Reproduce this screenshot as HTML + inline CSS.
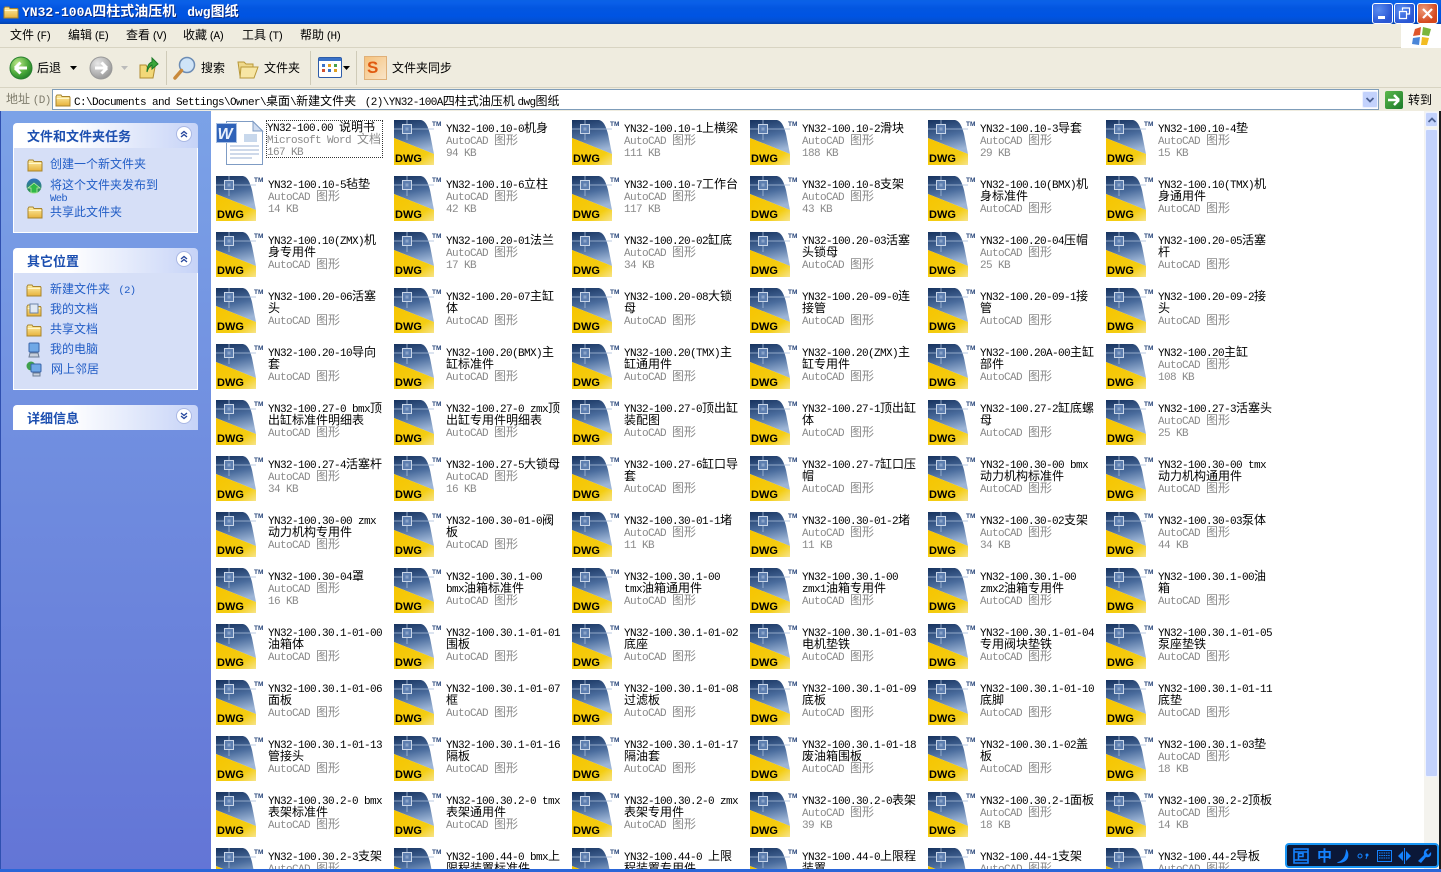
<!DOCTYPE html>
<html lang="zh"><head><meta charset="utf-8"><title>YN32-100A</title>
<style>
html,body{margin:0;padding:0;width:1441px;height:872px;overflow:hidden;background:#fff}
body{position:relative;font:12px/12px "WenQuanYi Zen Hei","Noto Sans CJK SC",sans-serif;color:#000}
.a{position:absolute;white-space:nowrap}
i{font:normal 11px/0 "Liberation Mono",monospace;letter-spacing:-.6px}
#title{left:0;top:0;width:1441px;height:24px;background:linear-gradient(#0a62e6 0,#0a5fe8 3px,#0356e0 8px,#0054e3 16px,#0350d2 21px,#0342ac 24px)}
#title .t{left:22px;top:4px;color:#fff;font-weight:bold;font-size:14px;line-height:15px;text-shadow:1px 1px 0 #0a2a80}
#title .t i{font-weight:bold;font-size:13px;letter-spacing:0}
.wb{top:3px;width:19px;height:19px;border:1px solid #fff;border-radius:3px;box-sizing:content-box;background:radial-gradient(circle at 30% 30%,#5a8cf0,#2a57d4 70%)}
#menu{left:0;top:24px;width:1441px;height:24px;background:#efecdf;border-bottom:1px solid #d8d4c2;box-sizing:border-box}
#menu span{position:absolute;top:5px}
#menu i{letter-spacing:-1.8px;margin-left:-1px}
#tool{left:0;top:48px;width:1441px;height:40px;background:#efecdf;border-bottom:1px solid #d8d4c2;box-sizing:border-box}
.sep{position:absolute;top:3px;width:1px;height:34px;background:#cfcbb8}
#addr{left:0;top:88px;width:1441px;height:23px;background:#efecdf}
#box{position:absolute;left:52px;top:1px;width:1327px;height:21px;border:1px solid #7f9db9;box-sizing:border-box;background:#fff}
#side{left:0;top:111px;width:211px;height:758px;background:linear-gradient(#7ba2e7,#6375d6);border-left:1px solid #2f50b0;box-sizing:border-box}
.ph{position:absolute;left:12px;width:185px;height:25px;border-radius:4px 4px 0 0;background:linear-gradient(90deg,#fff 30%,#c6d3f7);color:#1c4fb0;font-weight:bold;font-size:13px}
.ph span{position:absolute;left:14px;top:6px;line-height:13px}
.ph svg{position:absolute;right:6px;top:3px}
.pb{position:absolute;left:12px;width:185px;background:#d6dff7;border:1px solid #fff;border-top:0;box-sizing:border-box}
.l{color:#215dc6;left:50px}
.l i{font-size:10.5px}
#main{left:211px;top:111px;width:1213px;height:758px;background:#fff;overflow:hidden}
#grid{position:absolute;left:5px;top:9px;display:grid;grid-template-columns:repeat(6,178px);grid-auto-rows:56px}
.c{position:relative;height:56px}
.c svg{position:absolute;left:0;top:0;width:48px;height:46px}
.c u{position:absolute;left:1px;top:33px;text-decoration:none;font:bold 11px/12px "Liberation Sans",sans-serif;color:#000}
.c p{position:absolute;left:52px;top:2px;margin:0;white-space:nowrap}
.c b{font-weight:normal;color:#8a8a8a}
#sb{left:1424px;top:111px;width:15px;height:758px;background:#f4f3ee}
#thumb{position:absolute;left:1px;top:18px;width:13px;height:648px;background:#c3d2fc;border:1px solid #eef2fe;box-sizing:border-box;border-radius:2px}
#up{position:absolute;left:1px;top:1px;width:13px;height:15px;background:#c3d2fc;border:1px solid #eef2fe;box-sizing:border-box;border-radius:2px}
#task{left:0;top:869px;width:1441px;height:3px;background:#2a66d8}
#lang{left:1285px;top:843px;width:154px;height:25px;background:#0b1838;border:2px solid #1a96f5;border-radius:4px;box-sizing:border-box;color:#1583ff}
</style></head><body>
<svg width="0" height="0" style="position:absolute">
<defs>
<linearGradient id="bg" x1="0" y1="0" x2="0.25" y2="1"><stop offset="0" stop-color="#16325e"/><stop offset=".55" stop-color="#4b6d9e"/><stop offset="1" stop-color="#9db5d6"/></linearGradient>
<linearGradient id="yg" x1="0" y1="0" x2="1" y2="1"><stop offset="0" stop-color="#f6c400"/><stop offset=".7" stop-color="#f4cd12"/><stop offset="1" stop-color="#f7e48a"/></linearGradient>
<linearGradient id="fg" x1="0" y1="0" x2="0" y2="1"><stop offset="0" stop-color="#fff0a8"/><stop offset="1" stop-color="#e6b23c"/></linearGradient>
<symbol id="d" viewBox="0 0 48 46">
<path d="M1 0H27C32 1 34 7 36 14L40 34 0 18V0Z" fill="url(#bg)"/>
<path d="M0 18 40 34V45H0Z" fill="url(#yg)"/>
<path d="M13 0V20M0 9H40" stroke="#a9bdd8" stroke-width="1" opacity=".8" fill="none"/>
<rect x="8.500" y="4.500" width="9" height="9" fill="#5d7eaf" stroke="#c9d6e8"/>
<rect x="11.500" y="7.500" width="3" height="3" fill="#8aa4c9"/>
<text x="38" y="6" font-family="Liberation Sans" font-weight="bold" font-size="6.500" fill="#27457a">TM</text>
</symbol>
<symbol id="f" viewBox="0 0 16 16"><path d="M1 4.500 2 3H6L7 4.500H14.500L15 5.500V14H1Z" fill="url(#fg)" stroke="#a8842c"/><path d="M1.500 6.500H14.500" stroke="#fff6c8"/></symbol>
<symbol id="c" viewBox="0 0 16 16"><circle cx="8" cy="8" r="7.500" fill="#fff" stroke="#aab8e4"/><path d="M5 8 8 5.500 11 8M5 11 8 8.500 11 11" fill="none" stroke="#24459c" stroke-width="1.300"/></symbol>
<symbol id="e" viewBox="0 0 16 16"><circle cx="8" cy="8" r="7.500" fill="#fff" stroke="#aab8e4"/><path d="M5 5 8 7.500 11 5M5 8 8 10.500 11 8" fill="none" stroke="#24459c" stroke-width="1.300"/></symbol>
</defs></svg>

<div class="a" id="title">
<svg class="a" style="left:3px;top:4px" width="16" height="16"><use href="#f"/></svg>
<div class="a t"><i>YN32-100A</i>四柱式油压机 <i>&nbsp;dwg</i>图纸</div>
<div class="a wb" style="left:1372px"><div class="a" style="left:5px;top:12px;width:7px;height:3px;background:#fff"></div></div>
<div class="a wb" style="left:1394px"><svg class="a" style="left:3px;top:3px" width="13" height="13"><path d="M4.500 3.500V1H11.500V7H9M1.500 4.500H8.500V11.500H1.500Z" fill="none" stroke="#fff" stroke-width="1.200"/></svg></div>
<div class="a wb" style="left:1417px;background:radial-gradient(circle at 30% 30%,#ee9a78,#d4481e 70%)"><svg class="a" style="left:4px;top:4px" width="11" height="11"><path d="M1 1 10 10M10 1 1 10" stroke="#fff" stroke-width="2.200"/></svg></div>
</div>

<div class="a" id="menu">
<span style="left:10px">文件 <i>(F)</i></span><span style="left:68px">编辑 <i>(E)</i></span><span style="left:126px">查看 <i>(V)</i></span><span style="left:183px">收藏 <i>(A)</i></span><span style="left:242px">工具 <i>(T)</i></span><span style="left:300px">帮助 <i>(H)</i></span>
<div class="a" style="left:1401px;top:0;width:40px;height:24px;background:#fff"></div>
<svg class="a" style="left:1411px;top:2px" width="22" height="20"><path d="M4 3 10 1 9 9 2 10Z" fill="#e0562a"/><path d="M12 1 20 3 18 10 11 9Z" fill="#7ab53c"/><path d="M2 12 9 11 8 19 1 18Z" fill="#4a86d8"/><path d="M11 11 18 12 16 19 10 19Z" fill="#f2bc22"/></svg>
</div>

<div class="a" id="tool">
<svg class="a" style="left:9px;top:8px" width="24" height="24"><defs><radialGradient id="gr" cx=".35" cy=".3" r=".8"><stop offset="0" stop-color="#bfe88a"/><stop offset=".6" stop-color="#4aa83a"/><stop offset="1" stop-color="#1c7a28"/></radialGradient><radialGradient id="gy" cx=".35" cy=".3" r=".8"><stop offset="0" stop-color="#e8e8e8"/><stop offset="1" stop-color="#8f8f8f"/></radialGradient></defs><circle cx="12" cy="12" r="11" fill="url(#gr)" stroke="#2a8030"/><path d="M6 12H18M6 12 11.500 6.500M6 12 11.500 17.500" stroke="#fff" stroke-width="3" fill="none"/></svg>
<span class="a" style="left:37px;top:14px">后退</span>
<svg class="a" style="left:70px;top:18px" width="7" height="4"><path d="M0 0H7L3.500 4Z"/></svg>
<svg class="a" style="left:89px;top:8px" width="24" height="24"><circle cx="12" cy="12" r="11" fill="url(#gy)" stroke="#999"/><path d="M6 12H18M18 12 12.500 6.500M18 12 12.500 17.500" stroke="#fff" stroke-width="3" fill="none"/></svg>
<svg class="a" style="left:121px;top:18px" width="7" height="4"><path d="M0 0H7L3.500 4Z" fill="#bbb"/></svg>
<svg class="a" style="left:138px;top:7px" width="22" height="24"><path d="M2 10H8L9 12H17L15 23H2Z" fill="#f2d878" stroke="#b08c30"/><path d="M9 17C9 11 11 8 14 7V3L20 9 14 14V10C12 11 10 13 9 17Z" fill="#3aa63a" stroke="#1c7a28"/></svg>
<div class="sep" style="left:166px"></div>
<svg class="a" style="left:172px;top:7px" width="26" height="26"><circle cx="15" cy="10" r="7.500" fill="#cfe4f7" stroke="#6c8cb4" stroke-width="1.500"/><path d="M9.500 15.500 3 23" stroke="#c98a3c" stroke-width="3.500" stroke-linecap="round"/></svg>
<span class="a" style="left:201px;top:14px">搜索</span>
<svg class="a" style="left:236px;top:9px" width="24" height="24"><path d="M2 5H8L10 7H17V19H4Z" fill="#efd98c" stroke="#b89838"/><path d="M5 10H22L18 21H4Z" fill="#f7e6a4" stroke="#b89838"/></svg>
<span class="a" style="left:264px;top:14px">文件夹</span>
<div class="sep" style="left:310px"></div>
<svg class="a" style="left:318px;top:9px" width="24" height="21"><rect x=".5" y=".5" width="23" height="20" rx="1.500" fill="#fff" stroke="#2d5ca8"/><rect x="1" y="1" width="22" height="3" fill="#3a72c8"/><path d="M4 7h3v3H4z" fill="#3a72c8"/><path d="M10 7h3v3h-3z" fill="#e0a020"/><path d="M16 7h3v3h-3z" fill="#48a048"/><path d="M4 12h3v3H4z" fill="#d05030"/><path d="M10 12h3v3h-3z" fill="#3a72c8"/><path d="M16 12h3v3h-3z" fill="#e0a020"/></svg>
<svg class="a" style="left:343px;top:18px" width="7" height="4"><path d="M0 0H7L3.500 4Z"/></svg>
<div class="sep" style="left:356px"></div>
<div class="a" style="left:364px;top:8px;width:23px;height:24px;background:linear-gradient(135deg,#f6c27c,#f8e4c8);border:1px solid #e0b078;box-sizing:border-box;color:#e05a10;font:bold 17px/22px 'Liberation Sans',sans-serif;text-indent:2px">S</div>
<span class="a" style="left:392px;top:14px">文件夹同步</span>
</div>

<div class="a" id="addr">
<span class="a" style="left:6px;top:5px;color:#7f7c6c">地址 <i>(D)</i></span>
<div id="box"></div>
<svg class="a" style="left:55px;top:4px" width="16" height="16"><use href="#f"/></svg>
<span class="a" style="left:74px;top:7px"><i>C:\Documents and Settings\Owner\</i>桌面<i>\</i>新建文件夹 <i>&nbsp;(2)\YN32-100A</i>四柱式油压机 <i>dwg</i>图纸</span>
<div class="a" style="left:1362px;top:3px;width:16px;height:17px;background:#c3d2fc;border:1px solid #eef2fe;box-sizing:border-box;border-radius:2px"><svg class="a" style="left:3px;top:5px" width="8" height="6"><path d="M.5 1 4 4.500 7.500 1" fill="none" stroke="#4a5f90" stroke-width="1.800"/></svg></div>
<div class="a" style="left:1385px;top:3px;width:18px;height:18px;border-radius:2px;background:linear-gradient(135deg,#5cb84c,#1a7a2a)"><svg class="a" style="left:2px;top:2px" width="14" height="14"><path d="M1 7H12M12 7 7 2M12 7 7 12" stroke="#fff" stroke-width="2.500" fill="none"/></svg></div>
<span class="a" style="left:1408px;top:6px">转到</span>
</div>

<div class="a" id="side">
<div class="ph" style="top:12px"><span>文件和文件夹任务</span><svg width="16" height="16"><use href="#c"/></svg></div>
<div class="pb" style="top:37px;height:85px"></div>
<svg class="a" style="left:26px;top:46px" width="16" height="16"><use href="#f"/></svg>
<svg class="a" style="left:25px;top:67px" width="16" height="16"><defs><linearGradient id="gl" x1="0" y1="0" x2="0" y2="1"><stop offset="0" stop-color="#2f6fc0"/><stop offset="1" stop-color="#2f9a3c"/></linearGradient></defs><circle cx="8" cy="8" r="7.500" fill="url(#gl)"/><path d="M8 5 14 10H11V15H5V10H2Z" fill="#2fb848" stroke="#bdf0a4" stroke-width=".8"/></svg>
<svg class="a" style="left:26px;top:93px" width="16" height="16"><use href="#f"/></svg>
<span class="a l" style="top:47px;left:49px">创建一个新文件夹</span>
<span class="a l" style="top:68px;left:49px">将这个文件夹发布到</span>
<span class="a l" style="top:80px;left:49px"><i>Web</i></span>
<span class="a l" style="top:95px;left:49px">共享此文件夹</span>

<div class="ph" style="top:137px"><span>其它位置</span><svg width="16" height="16"><use href="#c"/></svg></div>
<div class="pb" style="top:162px;height:117px"></div>
<svg class="a" style="left:25px;top:171px" width="16" height="16"><use href="#f"/></svg>
<svg class="a" style="left:25px;top:191px" width="16" height="16"><use href="#f"/><rect x="4" y="2" width="8" height="9" fill="#dfe8f4" stroke="#6c84a8"/></svg>
<svg class="a" style="left:25px;top:211px" width="16" height="16"><use href="#f"/></svg>
<svg class="a" style="left:26px;top:231px" width="14" height="16"><rect x="2" y="1" width="10" height="9" rx="1" fill="#6fa8e6" stroke="#3a64a8"/><path d="M3 11H11L12 15H2Z" fill="#c8d0dc" stroke="#6c7c94"/></svg>
<svg class="a" style="left:25px;top:250px" width="17" height="16"><circle cx="5" cy="5" r="4.500" fill="#3fa04c"/><rect x="5" y="3" width="10" height="8" rx="1" fill="#6fa8e6" stroke="#3a64a8"/><path d="M7 12H14V15H7Z" fill="#c8d0dc" stroke="#6c7c94"/></svg>
<span class="a l" style="top:172px;left:49px">新建文件夹 <i>&nbsp;(2)</i></span>
<span class="a l" style="top:192px;left:49px">我的文档</span>
<span class="a l" style="top:212px;left:49px">共享文档</span>
<span class="a l" style="top:232px;left:49px">我的电脑</span>
<span class="a l" style="top:252px;left:50px">网上邻居</span>

<div class="ph" style="top:294px"><span>详细信息</span><svg width="16" height="16"><use href="#e"/></svg></div>
</div>

<div class="a" id="main"><div id="grid">
<div class="c"><svg viewBox="0 0 48 46"><path d="M10.500 1.500H37L46.500 11V44.500H10.500Z" fill="#fff" stroke="#7f9cc4"/><path d="M37 1.500V11H46.500Z" fill="#cfdcf0" stroke="#7f9cc4"/><path d="M14 26H43M14 30H43M14 34H43M14 38H36" stroke="#9db3d4"/><rect x="28" y="14" width="13" height="8" fill="#c8d8ec"/><rect x=".5" y="3.500" width="20" height="19" fill="#2f62b8" stroke="#a8c0e4"/><text x="1.500" y="19" font-family="Liberation Sans" font-weight="bold" font-style="italic" font-size="16" fill="#e8f0fc">W</text></svg><p style="outline:1px dotted #333;outline-offset:0;padding:0 0 0 0;left:51px;top:1px;width:115px;height:36px"><i>YN32-100.00 </i>说明书<br><b><i>Microsoft Word </i>文档<br><i>167 KB</i></b></p></div>
<div class="c"><svg><use href="#d"/></svg><u>DWG</u><p><i>YN32-100.10-0</i>机身<br><b><i>AutoCAD </i>图形<br><i>94 KB</i></b></p></div>
<div class="c"><svg><use href="#d"/></svg><u>DWG</u><p><i>YN32-100.10-1</i>上横梁<br><b><i>AutoCAD </i>图形<br><i>111 KB</i></b></p></div>
<div class="c"><svg><use href="#d"/></svg><u>DWG</u><p><i>YN32-100.10-2</i>滑块<br><b><i>AutoCAD </i>图形<br><i>188 KB</i></b></p></div>
<div class="c"><svg><use href="#d"/></svg><u>DWG</u><p><i>YN32-100.10-3</i>导套<br><b><i>AutoCAD </i>图形<br><i>29 KB</i></b></p></div>
<div class="c"><svg><use href="#d"/></svg><u>DWG</u><p><i>YN32-100.10-4</i>垫<br><b><i>AutoCAD </i>图形<br><i>15 KB</i></b></p></div>

<div class="c"><svg><use href="#d"/></svg><u>DWG</u><p><i>YN32-100.10-5</i>毡垫<br><b><i>AutoCAD </i>图形<br><i>14 KB</i></b></p></div>
<div class="c"><svg><use href="#d"/></svg><u>DWG</u><p><i>YN32-100.10-6</i>立柱<br><b><i>AutoCAD </i>图形<br><i>42 KB</i></b></p></div>
<div class="c"><svg><use href="#d"/></svg><u>DWG</u><p><i>YN32-100.10-7</i>工作台<br><b><i>AutoCAD </i>图形<br><i>117 KB</i></b></p></div>
<div class="c"><svg><use href="#d"/></svg><u>DWG</u><p><i>YN32-100.10-8</i>支架<br><b><i>AutoCAD </i>图形<br><i>43 KB</i></b></p></div>
<div class="c"><svg><use href="#d"/></svg><u>DWG</u><p><i>YN32-100.10(BMX)</i>机<br>身标准件<br><b><i>AutoCAD </i>图形</b></p></div>
<div class="c"><svg><use href="#d"/></svg><u>DWG</u><p><i>YN32-100.10(TMX)</i>机<br>身通用件<br><b><i>AutoCAD </i>图形</b></p></div>

<div class="c"><svg><use href="#d"/></svg><u>DWG</u><p><i>YN32-100.10(ZMX)</i>机<br>身专用件<br><b><i>AutoCAD </i>图形</b></p></div>
<div class="c"><svg><use href="#d"/></svg><u>DWG</u><p><i>YN32-100.20-01</i>法兰<br><b><i>AutoCAD </i>图形<br><i>17 KB</i></b></p></div>
<div class="c"><svg><use href="#d"/></svg><u>DWG</u><p><i>YN32-100.20-02</i>缸底<br><b><i>AutoCAD </i>图形<br><i>34 KB</i></b></p></div>
<div class="c"><svg><use href="#d"/></svg><u>DWG</u><p><i>YN32-100.20-03</i>活塞<br>头锁母<br><b><i>AutoCAD </i>图形</b></p></div>
<div class="c"><svg><use href="#d"/></svg><u>DWG</u><p><i>YN32-100.20-04</i>压帽<br><b><i>AutoCAD </i>图形<br><i>25 KB</i></b></p></div>
<div class="c"><svg><use href="#d"/></svg><u>DWG</u><p><i>YN32-100.20-05</i>活塞<br>杆<br><b><i>AutoCAD </i>图形</b></p></div>

<div class="c"><svg><use href="#d"/></svg><u>DWG</u><p><i>YN32-100.20-06</i>活塞<br>头<br><b><i>AutoCAD </i>图形</b></p></div>
<div class="c"><svg><use href="#d"/></svg><u>DWG</u><p><i>YN32-100.20-07</i>主缸<br>体<br><b><i>AutoCAD </i>图形</b></p></div>
<div class="c"><svg><use href="#d"/></svg><u>DWG</u><p><i>YN32-100.20-08</i>大锁<br>母<br><b><i>AutoCAD </i>图形</b></p></div>
<div class="c"><svg><use href="#d"/></svg><u>DWG</u><p><i>YN32-100.20-09-0</i>连<br>接管<br><b><i>AutoCAD </i>图形</b></p></div>
<div class="c"><svg><use href="#d"/></svg><u>DWG</u><p><i>YN32-100.20-09-1</i>接<br>管<br><b><i>AutoCAD </i>图形</b></p></div>
<div class="c"><svg><use href="#d"/></svg><u>DWG</u><p><i>YN32-100.20-09-2</i>接<br>头<br><b><i>AutoCAD </i>图形</b></p></div>

<div class="c"><svg><use href="#d"/></svg><u>DWG</u><p><i>YN32-100.20-10</i>导向<br>套<br><b><i>AutoCAD </i>图形</b></p></div>
<div class="c"><svg><use href="#d"/></svg><u>DWG</u><p><i>YN32-100.20(BMX)</i>主<br>缸标准件<br><b><i>AutoCAD </i>图形</b></p></div>
<div class="c"><svg><use href="#d"/></svg><u>DWG</u><p><i>YN32-100.20(TMX)</i>主<br>缸通用件<br><b><i>AutoCAD </i>图形</b></p></div>
<div class="c"><svg><use href="#d"/></svg><u>DWG</u><p><i>YN32-100.20(ZMX)</i>主<br>缸专用件<br><b><i>AutoCAD </i>图形</b></p></div>
<div class="c"><svg><use href="#d"/></svg><u>DWG</u><p><i>YN32-100.20A-00</i>主缸<br>部件<br><b><i>AutoCAD </i>图形</b></p></div>
<div class="c"><svg><use href="#d"/></svg><u>DWG</u><p><i>YN32-100.20</i>主缸<br><b><i>AutoCAD </i>图形<br><i>108 KB</i></b></p></div>

<div class="c"><svg><use href="#d"/></svg><u>DWG</u><p><i>YN32-100.27-0 bmx</i>顶<br>出缸标准件明细表<br><b><i>AutoCAD </i>图形</b></p></div>
<div class="c"><svg><use href="#d"/></svg><u>DWG</u><p><i>YN32-100.27-0 zmx</i>顶<br>出缸专用件明细表<br><b><i>AutoCAD </i>图形</b></p></div>
<div class="c"><svg><use href="#d"/></svg><u>DWG</u><p><i>YN32-100.27-0</i>顶出缸<br>装配图<br><b><i>AutoCAD </i>图形</b></p></div>
<div class="c"><svg><use href="#d"/></svg><u>DWG</u><p><i>YN32-100.27-1</i>顶出缸<br>体<br><b><i>AutoCAD </i>图形</b></p></div>
<div class="c"><svg><use href="#d"/></svg><u>DWG</u><p><i>YN32-100.27-2</i>缸底螺<br>母<br><b><i>AutoCAD </i>图形</b></p></div>
<div class="c"><svg><use href="#d"/></svg><u>DWG</u><p><i>YN32-100.27-3</i>活塞头<br><b><i>AutoCAD </i>图形<br><i>25 KB</i></b></p></div>

<div class="c"><svg><use href="#d"/></svg><u>DWG</u><p><i>YN32-100.27-4</i>活塞杆<br><b><i>AutoCAD </i>图形<br><i>34 KB</i></b></p></div>
<div class="c"><svg><use href="#d"/></svg><u>DWG</u><p><i>YN32-100.27-5</i>大锁母<br><b><i>AutoCAD </i>图形<br><i>16 KB</i></b></p></div>
<div class="c"><svg><use href="#d"/></svg><u>DWG</u><p><i>YN32-100.27-6</i>缸口导<br>套<br><b><i>AutoCAD </i>图形</b></p></div>
<div class="c"><svg><use href="#d"/></svg><u>DWG</u><p><i>YN32-100.27-7</i>缸口压<br>帽<br><b><i>AutoCAD </i>图形</b></p></div>
<div class="c"><svg><use href="#d"/></svg><u>DWG</u><p><i>YN32-100.30-00 bmx</i><br>动力机构标准件<br><b><i>AutoCAD </i>图形</b></p></div>
<div class="c"><svg><use href="#d"/></svg><u>DWG</u><p><i>YN32-100.30-00 tmx</i><br>动力机构通用件<br><b><i>AutoCAD </i>图形</b></p></div>

<div class="c"><svg><use href="#d"/></svg><u>DWG</u><p><i>YN32-100.30-00 zmx</i><br>动力机构专用件<br><b><i>AutoCAD </i>图形</b></p></div>
<div class="c"><svg><use href="#d"/></svg><u>DWG</u><p><i>YN32-100.30-01-0</i>阀<br>板<br><b><i>AutoCAD </i>图形</b></p></div>
<div class="c"><svg><use href="#d"/></svg><u>DWG</u><p><i>YN32-100.30-01-1</i>堵<br><b><i>AutoCAD </i>图形<br><i>11 KB</i></b></p></div>
<div class="c"><svg><use href="#d"/></svg><u>DWG</u><p><i>YN32-100.30-01-2</i>堵<br><b><i>AutoCAD </i>图形<br><i>11 KB</i></b></p></div>
<div class="c"><svg><use href="#d"/></svg><u>DWG</u><p><i>YN32-100.30-02</i>支架<br><b><i>AutoCAD </i>图形<br><i>34 KB</i></b></p></div>
<div class="c"><svg><use href="#d"/></svg><u>DWG</u><p><i>YN32-100.30-03</i>泵体<br><b><i>AutoCAD </i>图形<br><i>44 KB</i></b></p></div>

<div class="c"><svg><use href="#d"/></svg><u>DWG</u><p><i>YN32-100.30-04</i>罩<br><b><i>AutoCAD </i>图形<br><i>16 KB</i></b></p></div>
<div class="c"><svg><use href="#d"/></svg><u>DWG</u><p><i>YN32-100.30.1-00</i><br><i>bmx</i>油箱标准件<br><b><i>AutoCAD </i>图形</b></p></div>
<div class="c"><svg><use href="#d"/></svg><u>DWG</u><p><i>YN32-100.30.1-00</i><br><i>tmx</i>油箱通用件<br><b><i>AutoCAD </i>图形</b></p></div>
<div class="c"><svg><use href="#d"/></svg><u>DWG</u><p><i>YN32-100.30.1-00</i><br><i>zmx1</i>油箱专用件<br><b><i>AutoCAD </i>图形</b></p></div>
<div class="c"><svg><use href="#d"/></svg><u>DWG</u><p><i>YN32-100.30.1-00</i><br><i>zmx2</i>油箱专用件<br><b><i>AutoCAD </i>图形</b></p></div>
<div class="c"><svg><use href="#d"/></svg><u>DWG</u><p><i>YN32-100.30.1-00</i>油<br>箱<br><b><i>AutoCAD </i>图形</b></p></div>

<div class="c"><svg><use href="#d"/></svg><u>DWG</u><p><i>YN32-100.30.1-01-00</i><br>油箱体<br><b><i>AutoCAD </i>图形</b></p></div>
<div class="c"><svg><use href="#d"/></svg><u>DWG</u><p><i>YN32-100.30.1-01-01</i><br>围板<br><b><i>AutoCAD </i>图形</b></p></div>
<div class="c"><svg><use href="#d"/></svg><u>DWG</u><p><i>YN32-100.30.1-01-02</i><br>底座<br><b><i>AutoCAD </i>图形</b></p></div>
<div class="c"><svg><use href="#d"/></svg><u>DWG</u><p><i>YN32-100.30.1-01-03</i><br>电机垫铁<br><b><i>AutoCAD </i>图形</b></p></div>
<div class="c"><svg><use href="#d"/></svg><u>DWG</u><p><i>YN32-100.30.1-01-04</i><br>专用阀块垫铁<br><b><i>AutoCAD </i>图形</b></p></div>
<div class="c"><svg><use href="#d"/></svg><u>DWG</u><p><i>YN32-100.30.1-01-05</i><br>泵座垫铁<br><b><i>AutoCAD </i>图形</b></p></div>

<div class="c"><svg><use href="#d"/></svg><u>DWG</u><p><i>YN32-100.30.1-01-06</i><br>面板<br><b><i>AutoCAD </i>图形</b></p></div>
<div class="c"><svg><use href="#d"/></svg><u>DWG</u><p><i>YN32-100.30.1-01-07</i><br>框<br><b><i>AutoCAD </i>图形</b></p></div>
<div class="c"><svg><use href="#d"/></svg><u>DWG</u><p><i>YN32-100.30.1-01-08</i><br>过滤板<br><b><i>AutoCAD </i>图形</b></p></div>
<div class="c"><svg><use href="#d"/></svg><u>DWG</u><p><i>YN32-100.30.1-01-09</i><br>底板<br><b><i>AutoCAD </i>图形</b></p></div>
<div class="c"><svg><use href="#d"/></svg><u>DWG</u><p><i>YN32-100.30.1-01-10</i><br>底脚<br><b><i>AutoCAD </i>图形</b></p></div>
<div class="c"><svg><use href="#d"/></svg><u>DWG</u><p><i>YN32-100.30.1-01-11</i><br>底垫<br><b><i>AutoCAD </i>图形</b></p></div>

<div class="c"><svg><use href="#d"/></svg><u>DWG</u><p><i>YN32-100.30.1-01-13</i><br>管接头<br><b><i>AutoCAD </i>图形</b></p></div>
<div class="c"><svg><use href="#d"/></svg><u>DWG</u><p><i>YN32-100.30.1-01-16</i><br>隔板<br><b><i>AutoCAD </i>图形</b></p></div>
<div class="c"><svg><use href="#d"/></svg><u>DWG</u><p><i>YN32-100.30.1-01-17</i><br>隔油套<br><b><i>AutoCAD </i>图形</b></p></div>
<div class="c"><svg><use href="#d"/></svg><u>DWG</u><p><i>YN32-100.30.1-01-18</i><br>废油箱围板<br><b><i>AutoCAD </i>图形</b></p></div>
<div class="c"><svg><use href="#d"/></svg><u>DWG</u><p><i>YN32-100.30.1-02</i>盖<br>板<br><b><i>AutoCAD </i>图形</b></p></div>
<div class="c"><svg><use href="#d"/></svg><u>DWG</u><p><i>YN32-100.30.1-03</i>垫<br><b><i>AutoCAD </i>图形<br><i>18 KB</i></b></p></div>

<div class="c"><svg><use href="#d"/></svg><u>DWG</u><p><i>YN32-100.30.2-0 bmx</i><br>表架标准件<br><b><i>AutoCAD </i>图形</b></p></div>
<div class="c"><svg><use href="#d"/></svg><u>DWG</u><p><i>YN32-100.30.2-0 tmx</i><br>表架通用件<br><b><i>AutoCAD </i>图形</b></p></div>
<div class="c"><svg><use href="#d"/></svg><u>DWG</u><p><i>YN32-100.30.2-0 zmx</i><br>表架专用件<br><b><i>AutoCAD </i>图形</b></p></div>
<div class="c"><svg><use href="#d"/></svg><u>DWG</u><p><i>YN32-100.30.2-0</i>表架<br><b><i>AutoCAD </i>图形<br><i>39 KB</i></b></p></div>
<div class="c"><svg><use href="#d"/></svg><u>DWG</u><p><i>YN32-100.30.2-1</i>面板<br><b><i>AutoCAD </i>图形<br><i>18 KB</i></b></p></div>
<div class="c"><svg><use href="#d"/></svg><u>DWG</u><p><i>YN32-100.30.2-2</i>顶板<br><b><i>AutoCAD </i>图形<br><i>14 KB</i></b></p></div>

<div class="c"><svg><use href="#d"/></svg><p><i>YN32-100.30.2-3</i>支架<br><b><i>AutoCAD </i>图形</b></p></div>
<div class="c"><svg><use href="#d"/></svg><p><i>YN32-100.44-0 bmx</i>上<br>限程装置标准件</p></div>
<div class="c"><svg><use href="#d"/></svg><p><i>YN32-100.44-0 </i>上限<br>程装置专用件</p></div>
<div class="c"><svg><use href="#d"/></svg><p><i>YN32-100.44-0</i>上限程<br>装置</p></div>
<div class="c"><svg><use href="#d"/></svg><p><i>YN32-100.44-1</i>支架<br><b><i>AutoCAD </i>图形</b></p></div>
<div class="c"><svg><use href="#d"/></svg><p><i>YN32-100.44-2</i>导板<br><b><i>AutoCAD </i>图形</b></p></div>
</div></div>

<div class="a" id="sb">
<div id="up"><svg class="a" style="left:2px;top:4px" width="8" height="6"><path d="M.5 5 4 1.500 7.500 5" fill="none" stroke="#4a5f90" stroke-width="1.800"/></svg></div>
<div id="thumb"></div>
</div>
<div class="a" style="left:1439px;top:111px;width:2px;height:761px;background:#1c1c1c"></div>
<div class="a" id="task"></div>

<div class="a" id="lang">
<svg class="a" style="left:6px;top:3px" width="16" height="16"><path d="M1 1H15V15H1ZM1 4H15M1 12H15" fill="none" stroke="#1583ff" stroke-width="1.600"/><path d="M5.500 12V5.500H10V8.500H5.500" fill="none" stroke="#1583ff" stroke-width="1.600"/></svg>
<span class="a" style="left:30px;top:3px;font-size:15px;line-height:16px;font-weight:bold;color:#1583ff">中</span>
<svg class="a" style="left:50px;top:3px" width="14" height="16"><path d="M9 1C13 5 13 15 1 15 0 15 0 14 1 14 5 13 9 9 9 1Z" fill="#1583ff"/></svg>
<svg class="a" style="left:70px;top:6px" width="14" height="10"><circle cx="3" cy="5" r="2" fill="none" stroke="#1583ff"/><circle cx="10" cy="4" r="1.500" fill="#1583ff"/><path d="M10 5 9 8" stroke="#1583ff"/></svg>
<svg class="a" style="left:90px;top:5px" width="15" height="12"><rect x=".5" y=".5" width="14" height="11" fill="none" stroke="#1583ff"/><path d="M2 3H13M2 5.500H13M2 8H13" stroke="#1583ff" stroke-dasharray="1.500 .8"/></svg>
<svg class="a" style="left:111px;top:3px" width="13" height="16"><path d="M5 3V13L0 8ZM8 3V13L13 8Z" fill="#1583ff"/><path d="M6.500 0V16" stroke="#1583ff"/></svg>
<svg class="a" style="left:131px;top:3px" width="14" height="16"><path d="M11 1 8 4 10 7 13 4C14 8 11 10 8 9L3 15 0 13 6 7C5 3 8 0 11 1Z" fill="#1583ff"/></svg>
</div>
</body></html>
